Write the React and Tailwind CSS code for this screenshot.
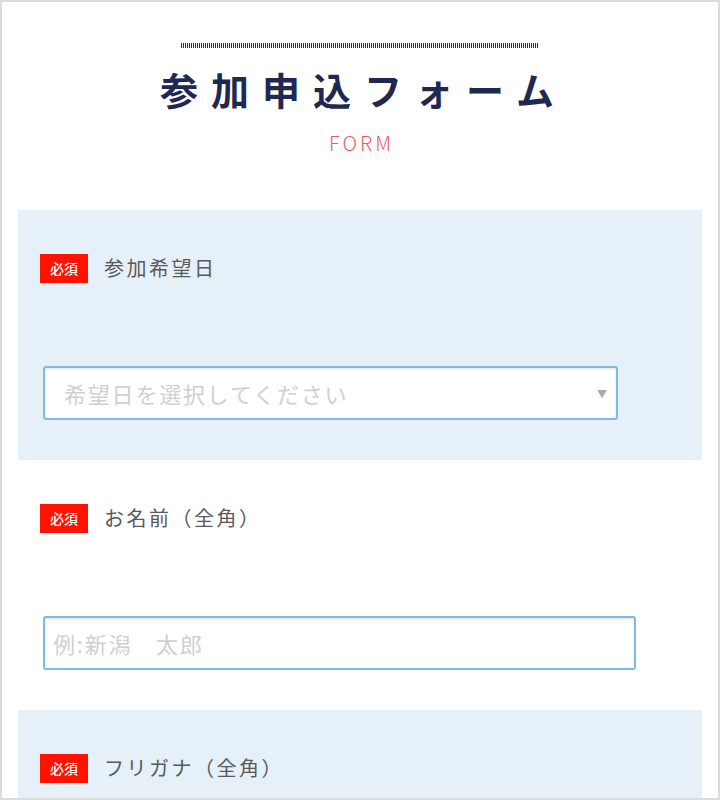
const jp = { fontFamily: '"Noto Sans CJK JP", "Noto Sans", sans-serif' }

function Badge() {
  return (
    <span className="flex h-[29px] w-[48px] shrink-0 items-center justify-center bg-[#ff1300] text-[14px] font-medium text-white">
      必須
    </span>
  )
}

function Field({ label, blue, children }) {
  return (
    <div className={`mx-4 h-[250px] pl-[22px] pt-[43px] ${blue ? 'bg-[#e5f0f8]' : 'bg-white'}`}>
      <div className="flex items-center gap-[16px]">
        <Badge />
        <span className="text-[20px] tracking-[2.5px] text-[#5a5a5a]">{label}</span>
      </div>
      <div className="ml-[3px] mt-[83px]">{children}</div>
    </div>
  )
}

export default function App() {
  return (
    <div style={jp} className="h-[800px] overflow-hidden border-2 border-[#dcdcdc] bg-white">
      <div className="flex flex-col items-center pt-[41px]">
        <div className="h-[5px] w-[358px] bg-[repeating-linear-gradient(90deg,#283052_0_1px,transparent_1px_2px)]" />
        <h1 className="mt-[19px] pl-[7px] text-[38px] font-semibold leading-[44px] tracking-[13px] text-[#1f2850]">
          参加申込フォーム
        </h1>
        <p className="mt-[20px] pl-[3px] text-[20px] font-light leading-[24px] tracking-[3px] text-[#ef5a64]">FORM</p>
      </div>

      <div className="mt-[55px]">
        <Field label="参加希望日" blue>
          <div className="flex h-[54px] w-[575px] items-center justify-between rounded-[3px] border-2 border-[#80b9e3] bg-white pl-[19px] pr-[9px] shadow-[inset_0_1px_3px_rgba(0,0,0,0.12)]">
            <span className="text-[22px] tracking-[1.8px] text-[#d0d0d0]">希望日を選択してください</span>
            <span className="text-[10px] text-[#aaa]">▼</span>
          </div>
        </Field>
        <Field label="お名前（全角）">
          <div className="flex h-[54px] w-[593px] items-center rounded-[3px] border-2 border-[#80b9e3] bg-white pl-[8px] shadow-[inset_0_1px_3px_rgba(0,0,0,0.12)]">
            <span className="text-[22px] tracking-[1.8px] text-[#d0d0d0]">例:新潟　太郎</span>
          </div>
        </Field>
        <Field label="フリガナ（全角）" blue>
          <div />
        </Field>
      </div>
    </div>
  )
}
